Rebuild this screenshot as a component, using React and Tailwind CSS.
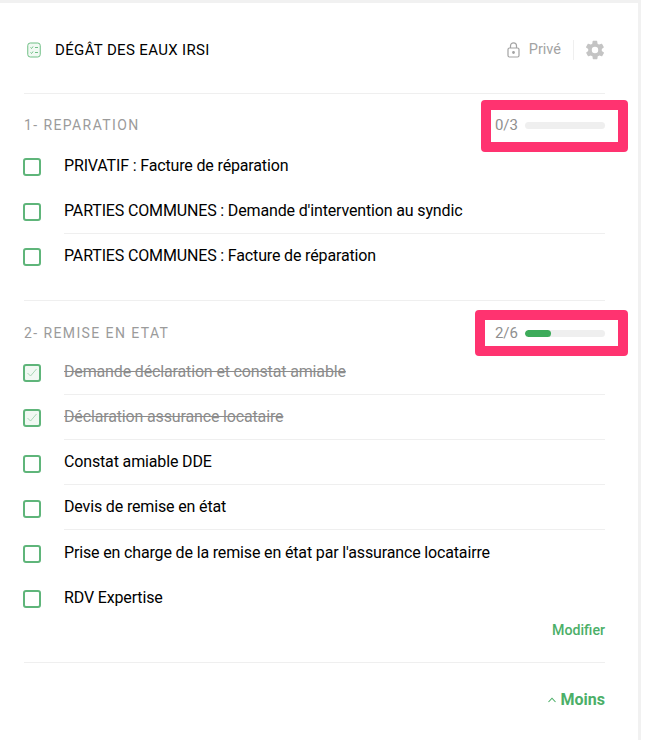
const sections = [
  {
    title: '1- REPARATION',
    count: '0/3',
    progress: 0,
    items: [
      { label: 'PRIVATIF : Facture de réparation', noLine: true },
      { label: "PARTIES COMMUNES : Demande d'intervention au syndic" },
      { label: 'PARTIES COMMUNES : Facture de réparation', noLine: true },
    ],
  },
  {
    title: '2- REMISE EN ETAT',
    count: '2/6',
    progress: 33,
    items: [
      { label: 'Demande déclaration et constat amiable', done: true },
      { label: 'Déclaration assurance locataire', done: true },
      { label: 'Constat amiable DDE' },
      { label: 'Devis de remise en état' },
      { label: "Prise en charge de la remise en état par l'assurance locatairre", noLine: true },
      { label: 'RDV Expertise', noLine: true },
    ],
  },
]

function ChecklistIcon() {
  return (
    <svg width="14" height="16" viewBox="0 0 14 16" fill="none" stroke="#6fbf85" strokeWidth="1">
      <rect x="0.75" y="1" width="12.5" height="14" rx="2.5" fill="#f1f9f3" />
      <path d="M3.5 5.5l1 1 1.5-2M8 5.5h3M3.5 10.5l1 1 1.5-2M8 10.5h3" />
    </svg>
  )
}

function LockIcon() {
  return (
    <svg width="13" height="16" viewBox="0 0 13 16" fill="none" stroke="#a3a3a3" strokeWidth="1.2">
      <rect x="1" y="6" width="11" height="9" rx="1.5" />
      <path d="M3.5 6V3.8a3 3 0 0 1 6 0V6" />
      <circle cx="6.5" cy="10.5" r="0.8" fill="#a3a3a3" />
    </svg>
  )
}

function GearIcon() {
  return (
    <svg width="22" height="22" viewBox="0 0 24 24" fill="#c4c4c4">
      <path d="M19.4 13a7.6 7.6 0 0 0 0-2l2.1-1.6a.5.5 0 0 0 .1-.6l-2-3.5a.5.5 0 0 0-.6-.2l-2.5 1a7.3 7.3 0 0 0-1.7-1l-.4-2.7a.5.5 0 0 0-.5-.4h-4a.5.5 0 0 0-.5.4l-.4 2.7a7.3 7.3 0 0 0-1.7 1l-2.5-1a.5.5 0 0 0-.6.2l-2 3.5a.5.5 0 0 0 .1.6L4.6 11a7.6 7.6 0 0 0 0 2l-2.1 1.6a.5.5 0 0 0-.1.6l2 3.5c.1.2.4.3.6.2l2.5-1c.5.4 1.1.7 1.7 1l.4 2.7c0 .2.2.4.5.4h4c.3 0 .5-.2.5-.4l.4-2.7c.6-.3 1.2-.6 1.7-1l2.5 1c.2.1.5 0 .6-.2l2-3.5a.5.5 0 0 0-.1-.6L19.4 13zM12 15.5a3.5 3.5 0 1 1 0-7 3.5 3.5 0 0 1 0 7z" />
    </svg>
  )
}

function Checkbox({ done }) {
  return (
    <div className={`w-[18px] h-[18px] shrink-0 -ml-px mt-[2px] rounded-[3px] border-2 border-[#5fb57a] flex items-center justify-center ${done ? 'bg-[#f1f9f3]' : 'bg-white'}`}>
      {done && (
        <svg width="12" height="10" viewBox="0 0 12 10" fill="none" stroke="#a9d8b6" strokeWidth="1">
          <path d="M1.5 5l3 3 6-7" />
        </svg>
      )}
    </div>
  )
}

function Row({ item }) {
  return (
    <div className="flex h-[45.2px]">
      <div className="w-10 shrink-0 flex items-center">
        <Checkbox done={item.done} />
      </div>
      <div className={`flex-1 flex items-center text-base tracking-[-0.15px] ${item.noLine ? '' : 'border-b border-[#efefef]'} ${item.done ? 'text-[#8c8c8c] line-through' : 'text-black'}`}>
        {item.label}
      </div>
    </div>
  )
}

function Section({ section, headerClass }) {
  return (
    <div className="border-t border-[#efefef]">
      <div className={`flex items-center justify-between ${headerClass}`}>
        <span className="text-sm tracking-[1.4px] text-[#9b9b9b]">{section.title}</span>
        <div className="flex items-center gap-[7px]">
          <span className="text-[15px] text-[#8f8f8f]">{section.count}</span>
          <div className="w-20 h-[7px] rounded-full bg-[#efefef] overflow-hidden">
            <div className="h-full rounded-full bg-[#3dab5a]" style={{ width: `${section.progress}%` }} />
          </div>
        </div>
      </div>
    </div>
  )
}

export default function App() {
  return (
    <div className="relative w-[670px] h-[740px] bg-white font-['Roboto',sans-serif]">
      <div className="w-[641px] h-[740px] border-t-[3px] border-r-[3px] border-[#f1f1f1] pl-6 pr-[33px]">
        <div className="flex items-center h-[90px] pt-[4px]">
          <span className="ml-[3px] flex"><ChecklistIcon /></span>
          <span className="ml-[14px] text-[15px] tracking-[0.35px] text-black">DÉGÂT DES EAUX IRSI</span>
          <div className="ml-auto -mr-px flex items-center">
            <LockIcon />
            <span className="ml-[9px] text-[14.5px] text-[#a3a3a3]">Privé</span>
            <div className="ml-[12px] mr-[10px] w-px h-5 bg-[#efefef]" />
            <GearIcon />
          </div>
        </div>

        <Section section={sections[0]} headerClass="h-[62px]" />
        <div className="-mt-[12.5px]">
          {sections[0].items.map((item, i) => (
            <Row key={i} item={item} />
          ))}
        </div>
        <div className="h-[21px]" />

        <Section section={sections[1]} headerClass="h-[64px]" />
        <div className="-mt-[15.5px]">
          {sections[1].items.map((item, i) => (
            <Row key={i} item={item} />
          ))}
        </div>

        <div className="flex justify-end items-center h-[20px] text-[14.2px] font-medium text-[#4caf68]">Modifier</div>
        <div className="border-t border-[#efefef] mt-[21px]" />
        <div className="flex justify-end items-center gap-[5px] h-[74px] text-base font-bold text-[#4caf68]">
          <svg width="8" height="6" viewBox="0 0 8 6" fill="none" stroke="#4caf68" strokeWidth="1.1">
            <path d="M0.5 5L4 1.2 7.5 5" />
          </svg>
          Moins
        </div>
      </div>

      <div className="absolute left-[481px] top-[100px] w-[147px] h-[52px] border-[10px] border-[#ff3370] rounded-[4px]" />
      <div className="absolute left-[475px] top-[310px] w-[153px] h-[46px] border-[10px] border-[#ff3370] rounded-[4px]" />
    </div>
  )
}
